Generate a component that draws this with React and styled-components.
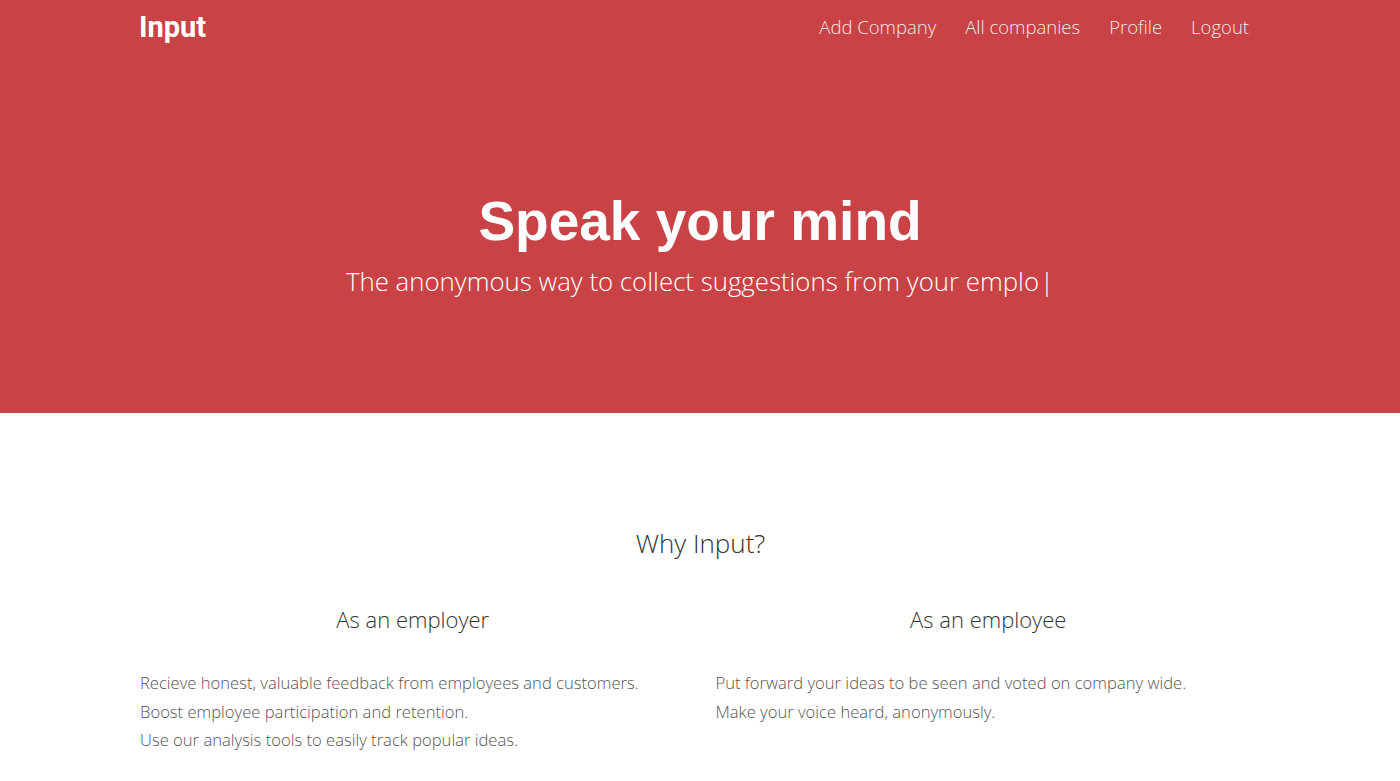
import React from "react";
import styled, { createGlobalStyle } from "styled-components";

const GlobalStyle = createGlobalStyle`
  body {
    margin: 0;
    background: #fff;
    font-family: "Open Sans", sans-serif;
  }
`;

function App() {
  return (
    <>
      <GlobalStyle />
      <Hero>
        <Nav>
          <Logo>Input</Logo>
          <Links>
            <NavLink href="#">Add Company</NavLink>
            <NavLink href="#">All companies</NavLink>
            <NavLink href="#">Profile</NavLink>
            <NavLink href="#">Logout</NavLink>
          </Links>
        </Nav>
        <HeroBody>
          <Title>Speak your mind</Title>
          <Tagline>
            The anonymous way to collect suggestions from your emplo<Cursor>|</Cursor>
          </Tagline>
        </HeroBody>
      </Hero>
      <Why>
        <WhyTitle>Why Input?</WhyTitle>
        <Columns>
          <Column>
            <ColumnTitle>As an employer</ColumnTitle>
            <Line>Recieve honest, valuable feedback from employees and customers.</Line>
            <Line>Boost employee participation and retention.</Line>
            <Line>Use our analysis tools to easily track popular ideas.</Line>
          </Column>
          <Column>
            <ColumnTitle>As an employee</ColumnTitle>
            <Line>Put forward your ideas to be seen and voted on company wide.</Line>
            <Line>Make your voice heard, anonymously.</Line>
          </Column>
        </Columns>
      </Why>
    </>
  );
}
export default App;

const Hero = styled.header`
  background-color: #c94346;
  height: 413px;
  display: flex;
  flex-direction: column;
`;

const Nav = styled.nav`
  width: 1122px;
  margin: 0 auto;
  height: 53px;
  display: flex;
  align-items: center;
  justify-content: space-between;
`;

const Logo = styled.a`
  font-family: Roboto, "Liberation Sans", sans-serif;
  font-weight: 700;
  font-size: 29px;
  color: #fff;
`;

const Links = styled.div`
  display: flex;
  gap: 29px;
  padding-right: 12px;
`;

const NavLink = styled.a`
  font-family: "Open Sans", sans-serif;
  font-weight: 300;
  font-size: 18.5px;
  color: rgba(255, 255, 255, 0.9);
  text-decoration: none;
`;

const HeroBody = styled.div`
  display: flex;
  flex-direction: column;
  align-items: center;
  padding-top: 132px;
`;

const Title = styled.h1`
  margin: 0;
  font-family: "Liberation Sans", Arial, sans-serif;
  font-weight: 700;
  font-size: 55px;
  line-height: 72px;
  color: #fff;
`;

const Tagline = styled.p`
  margin: 6px 0 0;
  font-weight: 300;
  font-size: 25.8px;
  line-height: 36px;
  color: #fff;
`;

const Cursor = styled.span`
  margin-left: 1px;
`;

const Why = styled.section`
  width: 1122px;
  margin: 0 auto;
  padding: 110px 0 0 1px;
  box-sizing: border-box;
  color: #333;
`;

const WhyTitle = styled.h2`
  margin: 0;
  text-align: center;
  font-weight: 300;
  font-size: 26px;
  line-height: 40px;
`;

const Columns = styled.div`
  display: grid;
  grid-template-columns: 1fr 1fr;
  column-gap: 30px;
  margin-top: 40px;
`;

const Column = styled.div`
  display: flex;
  flex-direction: column;
`;

const ColumnTitle = styled.h3`
  margin: 0 0 34px;
  text-align: center;
  font-weight: 300;
  font-size: 22px;
  line-height: 32px;
`;

const Line = styled.p`
  margin: 0;
  font-weight: 300;
  font-size: 16.6px;
  line-height: 28.7px;
  color: #555;
`;
